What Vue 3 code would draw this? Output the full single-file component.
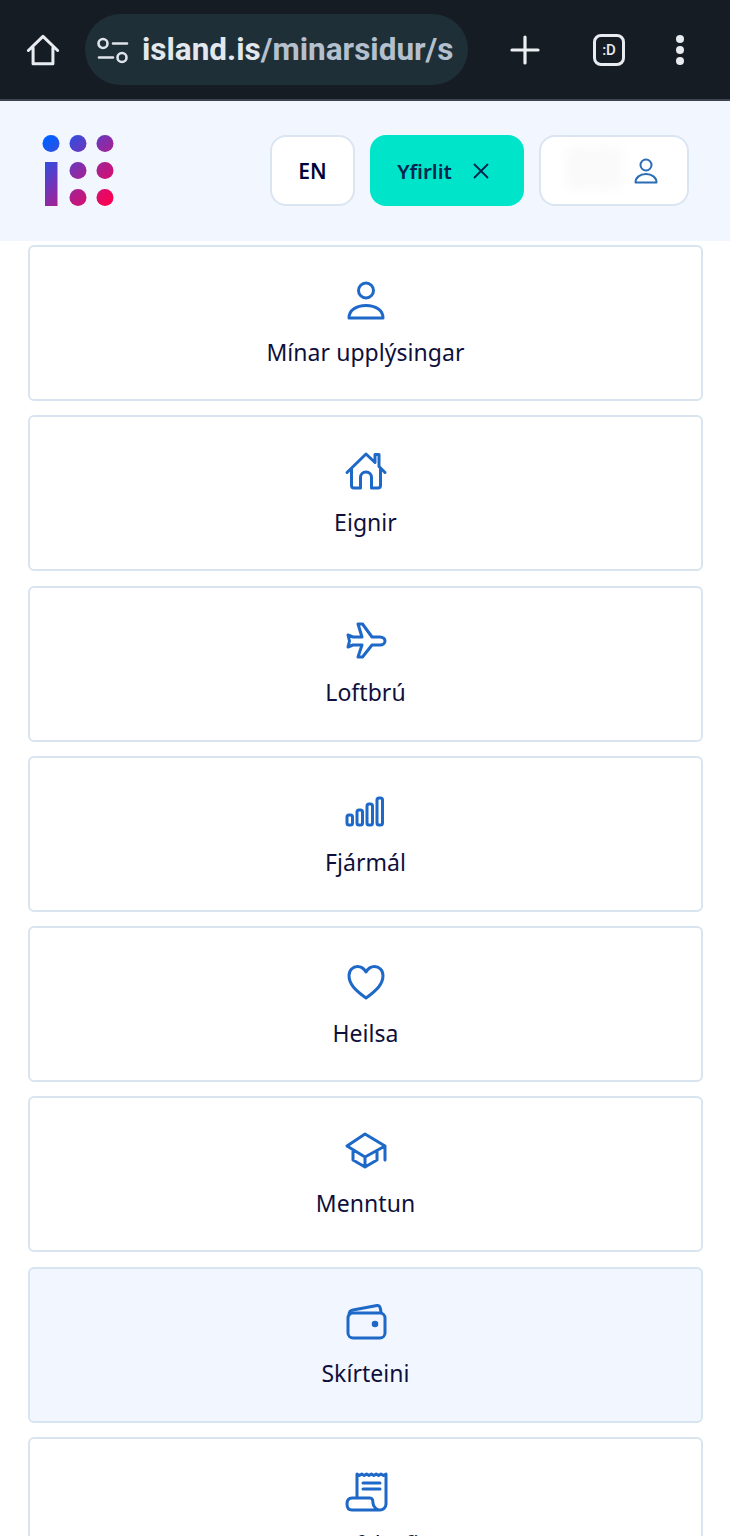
<template>
  <div class="screen">
    <!-- Browser bar -->
    <div class="browser-bar">
      <svg class="home-icon" width="34" height="34" viewBox="0 0 36 36" fill="none">
        <path d="M2.500 18.500 18 3.500l15.500 15M7.500 15.500V32.500h21V15.500" stroke="#e8ebef" stroke-width="3.200" stroke-linecap="round" stroke-linejoin="round" />
      </svg>
      <div class="url-pill">
        <svg width="32" height="30" viewBox="0 0 32 30" fill="none" stroke="#dfe4ea" stroke-width="2.600" stroke-linecap="round">
          <circle cx="6" cy="8.500" r="4.500" />
          <path d="M16 8.500h14M2 22.500h14" />
          <circle cx="25" cy="22.500" r="4.500" />
        </svg>
        <span class="url"><b>island.is</b>/minarsidur/s</span>
      </div>
      <svg class="plus-icon" width="30" height="30" viewBox="0 0 30 30" fill="none">
        <path d="M15 2v26M2 15h26" stroke="#eceff2" stroke-width="3.200" stroke-linecap="round" />
      </svg>
      <div class="tab-count">:D</div>
      <div class="menu-dots"><i></i><i></i><i></i></div>
    </div>

    <!-- Header -->
    <header class="site-header">
      <svg class="logo" width="72" height="72" viewBox="0 0 72 72">
        <defs>
          <linearGradient id="logoGrad" gradientUnits="userSpaceOnUse" x1="4" y1="4" x2="68" y2="68">
            <stop offset="0" stop-color="#0061ff" />
            <stop offset="0.5" stop-color="#8a2ba8" />
            <stop offset="1" stop-color="#ff0050" />
          </linearGradient>
        </defs>
        <g fill="url(#logoGrad)">
          <circle cx="9" cy="8.500" r="8.500" />
          <circle cx="36" cy="8.500" r="8.500" />
          <circle cx="63" cy="8.500" r="8.500" />
          <rect x="3" y="27" width="12.500" height="44" />
          <circle cx="36" cy="35.500" r="8.500" />
          <circle cx="63" cy="35.500" r="8.500" />
          <circle cx="36" cy="62.500" r="8.500" />
          <circle cx="63" cy="62.500" r="8.500" />
        </g>
      </svg>
      <div class="header-actions">
        <button class="btn btn-lang">EN</button>
        <button class="btn btn-overview">
          <span>Yfirlit</span>
          <svg width="16" height="16" viewBox="0 0 16 16" fill="none">
            <path d="M1.500 1.500l13 13M14.500 1.500l-13 13" stroke="#00264f" stroke-width="1.800" stroke-linecap="round" />
          </svg>
        </button>
        <button class="btn btn-user">
          <span class="blurred-name"></span>
          <svg width="24" height="26" viewBox="0 0 24 26" fill="none" stroke="#2a6db5" stroke-width="2">
            <circle cx="12" cy="7" r="5.500" />
            <path d="M1.500 24.500c0-5 4.500-8.500 10.500-8.500s10.500 3.500 10.500 8.500z" stroke-linejoin="round" />
          </svg>
        </button>
      </div>
    </header>

    <!-- Menu cards -->
    <nav class="menu">
      <a v-for="item in items" :key="item.label" class="card" :class="{ active: item.active }">
        <svg class="card-icon" width="44" height="44" viewBox="0 0 44 44" fill="none" v-html="item.icon"></svg>
        <span class="card-label">{{ item.label }}</span>
      </a>
    </nav>
  </div>
</template>

<script setup>
const items = [
  {
    label: 'Mínar upplýsingar',
    icon: '<circle cx="22" cy="11.500" r="7.500" /><path d="M5 39c0-8 7.500-12.500 17-12.500S39 31 39 39z" />'
  },
  {
    label: 'Eignir',
    icon: '<path d="M3 23.500 22 5l9 8.500M31 13V5.500h4V17.500l6 6M7.500 20v16.500a2.500 2.500 0 0 0 2.500 2.500h6.500V28.500a5.500 5.500 0 0 1 11 0V39H34a2.500 2.500 0 0 0 2.500-2.500V20" />'
  },
  {
    label: 'Loftbrú',
    icon: '<path d="M14 4h4.500L28 17h8c3 0 5 2 5 4s-2 4-5 4h-8l-9.500 12H14l4-12H9l-5 2 1.500-6L4 15l5 2h9z" />'
  },
  {
    label: 'Fjármál',
    icon: '<rect x="3" y="25" width="5.500" height="10" rx="2" /><rect x="13" y="20" width="5.500" height="15" rx="2" /><rect x="23" y="14" width="5.500" height="21" rx="2" /><rect x="33" y="8" width="5.500" height="27" rx="2" />'
  },
  {
    label: 'Heilsa',
    icon: '<path d="M22 38C11 30 5 24 5 15.500 5 10 9 6.500 13.500 6.500c3.500 0 6.500 2 8.500 5.500 2-3.500 5-5.500 8.500-5.500C35 6.500 39 10 39 15.500 39 24 33 30 22 38z" />'
  },
  {
    label: 'Menntun',
    icon: '<path d="M21 4 3 16l18 11 20-11zM9 21v9l12 7 12-7v-9M21 27v10M41 16v14" />'
  },
  {
    label: 'Skírteini',
    icon: '<rect x="4" y="12" width="37" height="25" rx="5" /><path d="M5 14c0-3 1-4.500 4-5L33 4.500c2.500-.5 3.500 1.500 4 7" /><circle cx="31" cy="23" r="1.800" fill="#1e68c8" />',
    active: true
  },
  {
    label: 'Starfsleyfi',
    icon: '<path d="M13 27V3l2.400 1.500L17.800 3l2.400 1.500L22.600 3 25 4.500 27.400 3l2.400 1.500L32.200 3l2.400 1.500L37 3l2.500 1.500L42 3v30c0 3.500-3 6-6 6s-7-3-7-7c0-3-1-5-3-5H8c-3 0-5 2-5 6s2 6 5 6h28M19 12h17M19 18h17" />'
  }
]
</script>

<style scoped>
.screen {
  width: 730px;
  height: 1536px;
  overflow: hidden;
  background: #fff;
  font-family: "Noto Sans", "Open Sans", sans-serif;
}

.browser-bar {
  height: 101px;
  box-sizing: border-box;
  border-bottom: 2px solid #3c4550;
  background: #161c24;
  display: flex;
  align-items: center;
  padding-left: 26px;
}

.home-icon {
  flex: none;
}

.url-pill {
  margin-left: 25px;
  width: 383px;
  height: 71px;
  border-radius: 36px;
  background: #1f2f38;
  display: flex;
  align-items: center;
  padding-left: 12px;
  box-sizing: border-box;
  gap: 13px;
}

.url {
  font-family: Roboto, sans-serif;
  font-size: 31.500px;
  font-weight: 700;
  color: #b4c0ce;
  white-space: nowrap;
}

.url b {
  color: #e3e8ee;
  font-weight: 700;
}

.plus-icon {
  margin-left: 42px;
  flex: none;
}

.tab-count {
  margin-left: 53px;
  width: 32px;
  height: 32px;
  box-sizing: border-box;
  border: 3px solid #e8ebef;
  border-radius: 8px;
  color: #e8ebef;
  font-family: Roboto, sans-serif;
  font-size: 15px;
  font-weight: 500;
  display: flex;
  align-items: center;
  justify-content: center;
  flex: none;
}

.menu-dots {
  margin-left: 51px;
  display: flex;
  flex-direction: column;
  gap: 3px;
}

.menu-dots i {
  display: block;
  width: 8px;
  height: 8px;
  border-radius: 50%;
  background: #e8ebef;
}

.site-header {
  height: 140px;
  background: #f2f7ff;
  display: flex;
  align-items: center;
  justify-content: space-between;
  padding: 0 41px 0 42px;
}

.logo {
  flex: none;
}

.header-actions {
  display: flex;
  gap: 15px;
  margin-bottom: 1px;
}

.btn {
  height: 71px;
  box-sizing: border-box;
  border-radius: 16px;
  border: 2px solid #dbe5f2;
  background: #fff;
  display: flex;
  align-items: center;
  justify-content: center;
  font-family: "Noto Sans", sans-serif;
  font-size: 21px;
  font-weight: 600;
  color: #00003c;
  padding: 0;
}

.btn-lang {
  width: 85px;
}

.btn-overview {
  width: 154px;
  border: none;
  background: #00e4ca;
  gap: 21px;
  padding-right: 8px;
}

.btn-overview span {
  color: #00264f;
  font-size: 20.500px;
}

.btn-user {
  width: 150px;
  position: relative;
  justify-content: flex-end;
  padding-right: 29px;
}

.blurred-name {
  position: absolute;
  left: 24px;
  top: 10px;
  width: 58px;
  height: 42px;
  background: #fafafa;
  filter: blur(5px);
  border-radius: 8px;
}

.menu {
  display: flex;
  flex-direction: column;
  gap: 14.300px;
  padding: 4px 27px 0 28px;
}

.card {
  height: 156px;
  flex: none;
  box-sizing: border-box;
  border: 2px solid #d8e5f0;
  border-radius: 6px;
  background: #fff;
  display: flex;
  flex-direction: column;
  align-items: center;
  padding-top: 32px;
  gap: 11.500px;
}

.card.active {
  background: #f2f7ff;
}

.card-icon {
  stroke: #1e68c8;
  stroke-width: 3;
  stroke-linecap: round;
  stroke-linejoin: round;
}

.card-label {
  font-size: 23px;
  line-height: 34px;
  color: #0f0f3c;
  letter-spacing: 0.050px;
}
</style>
